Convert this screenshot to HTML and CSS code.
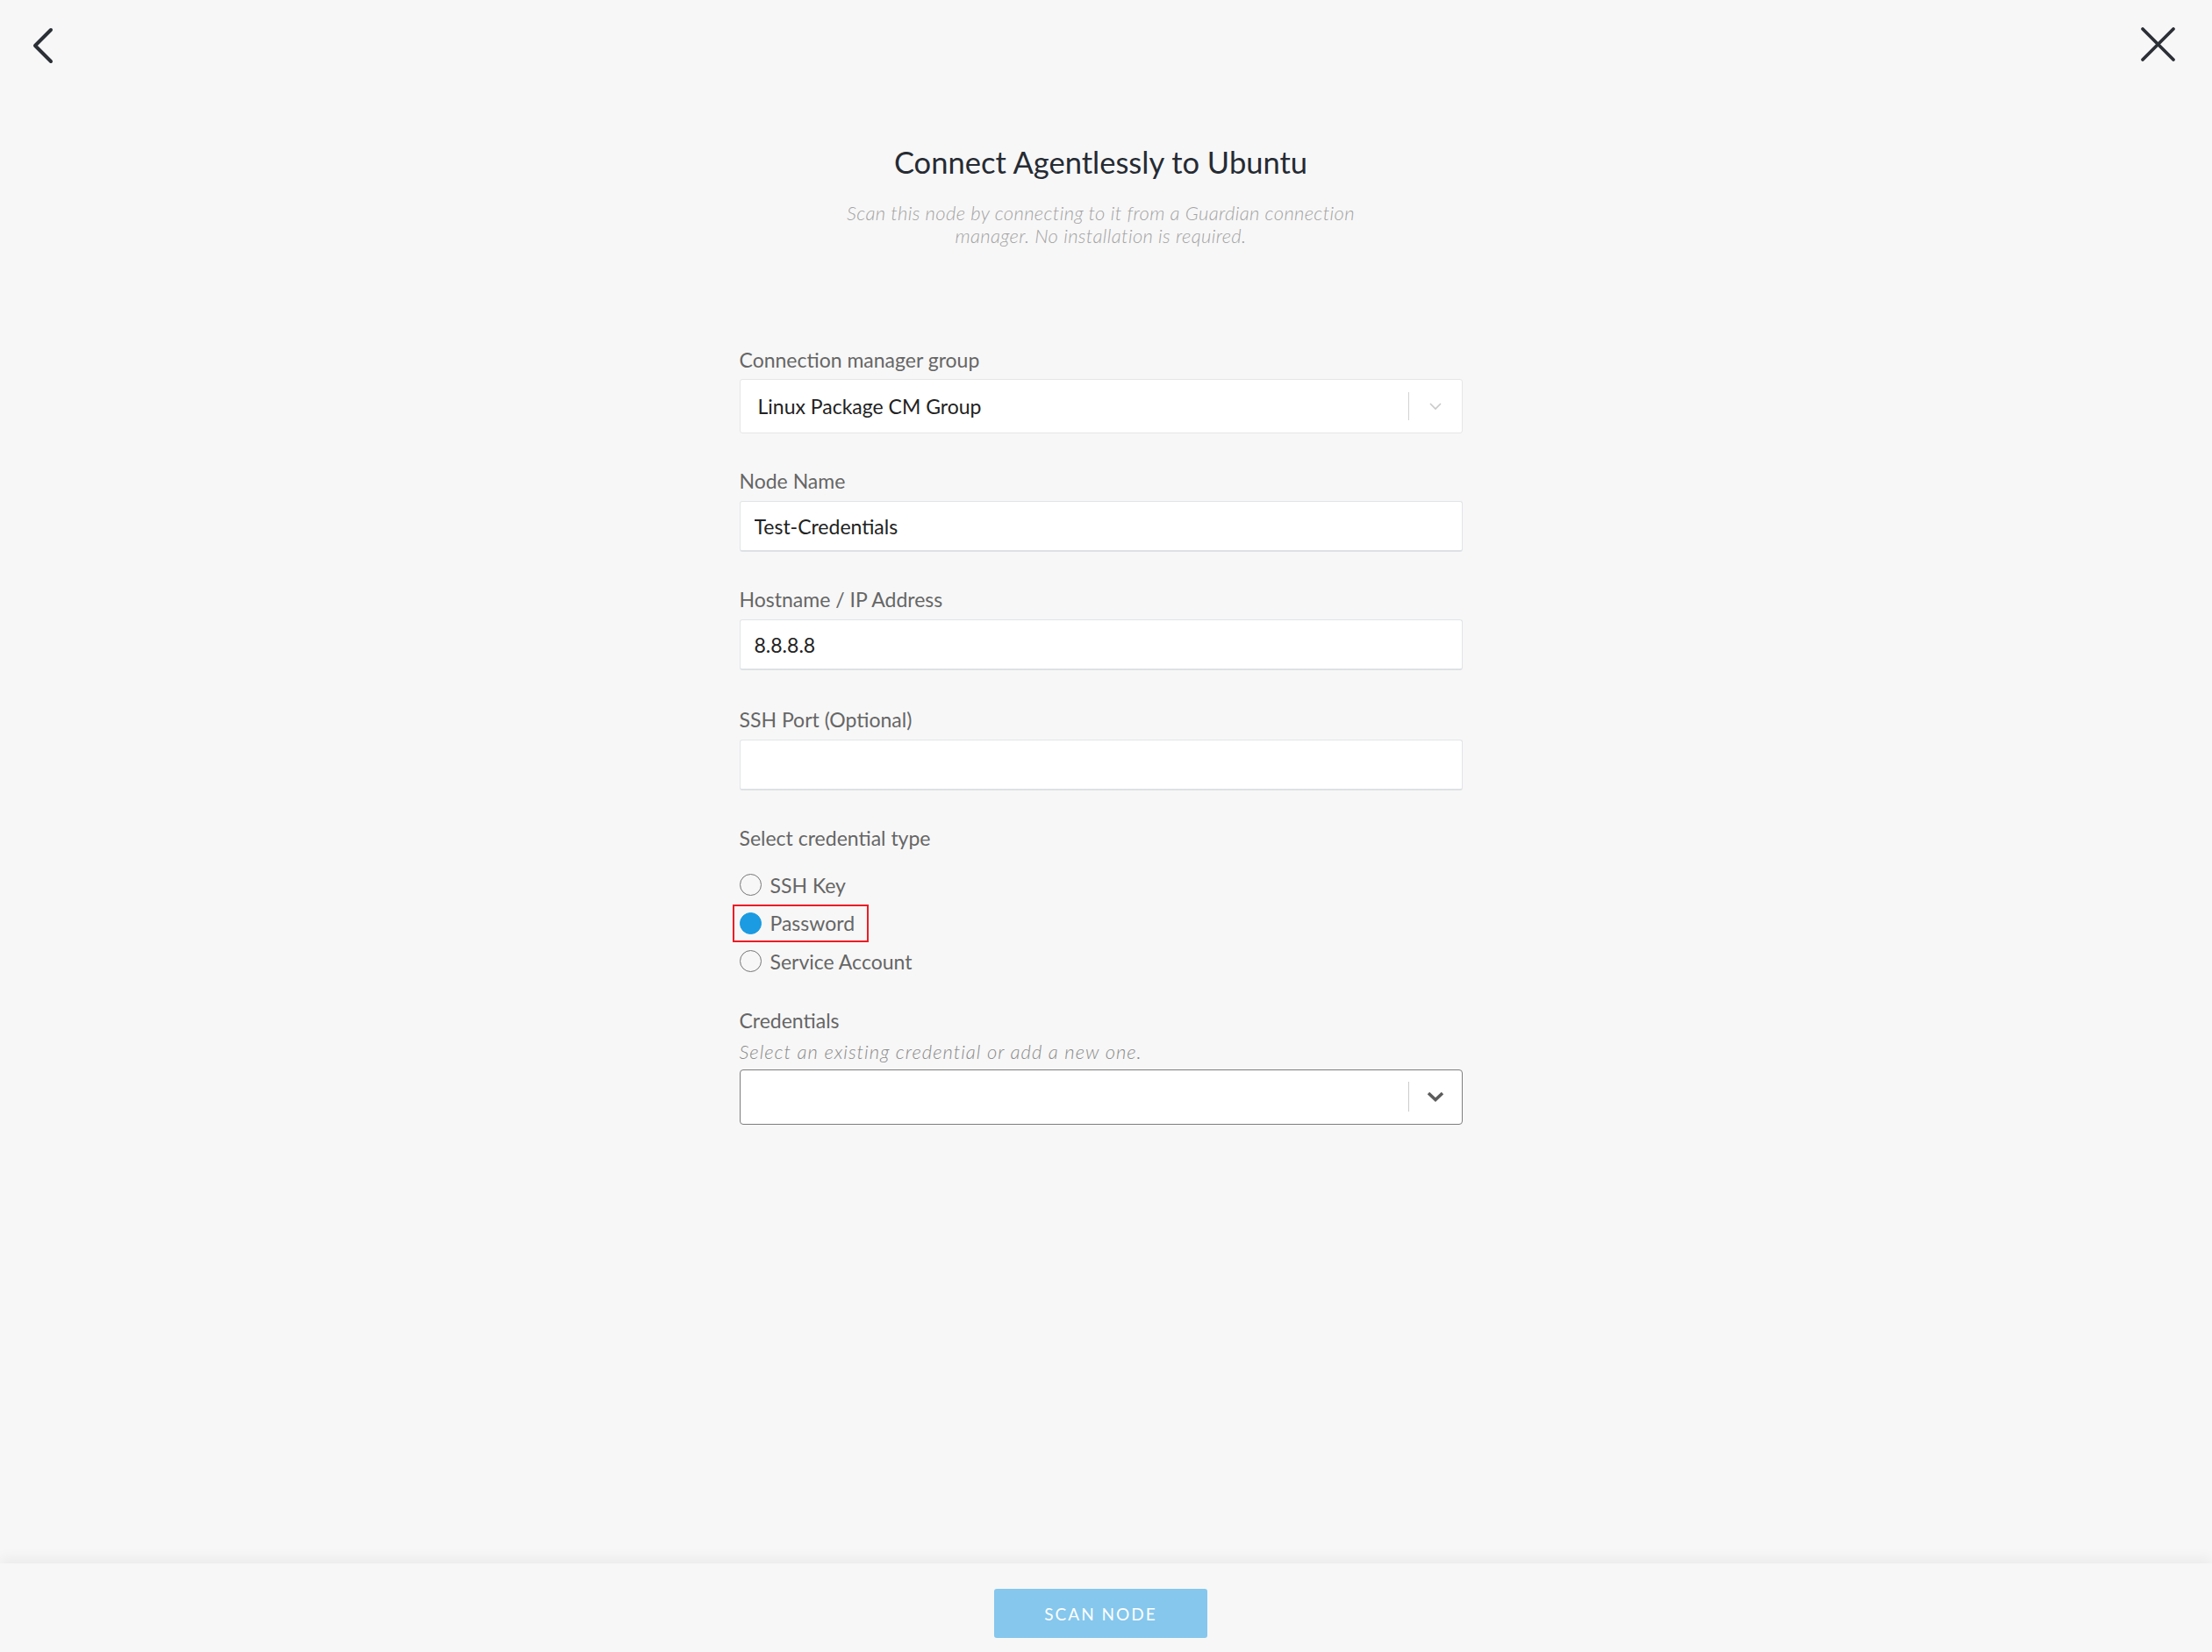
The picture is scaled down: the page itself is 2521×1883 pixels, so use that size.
FILE: index.html
```html
<!DOCTYPE html>
<html lang="en">
<head>
    <meta charset="UTF-8">
    <meta name="viewport" content="width=device-width, initial-scale=1.0">
    <title>Connect Agentlessly to Ubuntu</title>
    <link rel="stylesheet" href="styles.css">
</head>
<body>
    <div class="topbar">
        <a class="icon-btn back" href="#">
            <svg width="28" height="44" viewBox="0 0 28 44">
                <polyline points="22,4 4,22 22,40" fill="none" stroke="#2b2f36" stroke-width="4" stroke-linecap="round" stroke-linejoin="round"/>
            </svg>
        </a>
        <a class="icon-btn close" href="#">
            <svg width="44" height="44" viewBox="0 0 44 44">
                <line x1="4" y1="4" x2="39" y2="39" stroke="#2b2f36" stroke-width="3.8" stroke-linecap="round"/>
                <line x1="39" y1="4" x2="4" y2="39" stroke="#2b2f36" stroke-width="3.8" stroke-linecap="round"/>
            </svg>
        </a>
    </div>

    <div class="content">
        <h1>Connect Agentlessly to Ubuntu</h1>
        <p class="subtitle">Scan this node by connecting to it from a Guardian connection manager. No installation is required.</p>

        <div class="form">
            <div class="field">
                <label class="field-label">Connection manager group</label>
                <div class="select">
                    <span class="select-value">Linux Package CM Group</span>
                    <span class="select-sep"></span>
                    <span class="select-arrow">
                        <svg width="16" height="10" viewBox="0 0 16 10">
                            <polyline points="2,2 8,8 14,2" fill="none" stroke="#c9c9c9" stroke-width="1.6"/>
                        </svg>
                    </span>
                </div>
            </div>

            <div class="field">
                <label class="field-label">Node Name</label>
                <input class="text-input" type="text" value="Test-Credentials">
            </div>

            <div class="field field-wide">
                <label class="field-label">Hostname / IP Address</label>
                <input class="text-input" type="text" value="8.8.8.8">
            </div>

            <div class="field">
                <label class="field-label">SSH Port (Optional)</label>
                <input class="text-input" type="text" value="">
            </div>

            <div class="field radio-field">
                <label class="field-label">Select credential type</label>
                <div class="radio-list">
                    <div class="radio"><span class="radio-dot"></span>SSH Key</div>
                    <div class="radio marked"><span class="radio-dot checked"></span>Password</div>
                    <div class="radio"><span class="radio-dot"></span>Service Account</div>
                </div>
            </div>

            <div class="field">
                <label class="field-label">Credentials</label>
                <p class="hint">Select an existing credential or add a new one.</p>
                <div class="select select-dark">
                    <span class="select-value"></span>
                    <span class="select-sep"></span>
                    <span class="select-arrow">
                        <svg width="22" height="14" viewBox="0 0 22 14">
                            <polyline points="3,3 11,10.5 19,3" fill="none" stroke="#5c5c5c" stroke-width="3.6"/>
                        </svg>
                    </span>
                </div>
            </div>
        </div>
    </div>

    <div class="footer">
        <button class="scan-btn" disabled>SCAN NODE</button>
    </div>
</body>
</html>
```

FILE: styles.css
```css
* {
    box-sizing: border-box;
}
body {
    font-family: Lato, "Open Sans", sans-serif;
    background-color: #f7f7f7;
    color: #2a2f36;
    margin: 0;
    padding: 0;
    height: 100vh;
    display: flex;
    flex-direction: column;
}
.topbar {
    display: flex;
    justify-content: space-between;
    align-items: flex-start;
    height: 100px;
    padding: 29px 39px 0 36px;
}
.icon-btn {
    display: block;
    line-height: 0;
}
.icon-btn.back {
    margin-top: 1px;
}
.content {
    flex: 1;
    display: flex;
    flex-direction: column;
    align-items: center;
    padding: 63px 12px 0 0;
}
.content h1 {
    margin: 0;
    font-size: 34.5px;
    line-height: 44px;
    font-weight: 400;
    color: #262b33;
}
.subtitle {
    margin: 23px 0 0;
    max-width: 620px;
    font-size: 22px;
    line-height: 26px;
    letter-spacing: 0.35px;
    font-style: italic;
    font-weight: 300;
    color: #a3a3a3;
    text-align: center;
}
.form {
    width: 824px;
    margin-top: 114px;
}
.field {
    margin-bottom: 40px;
}
.field-wide {
    margin-bottom: 42px;
}
.field-label {
    display: block;
    font-size: 23px;
    line-height: 28px;
    color: #666666;
    margin-bottom: 9px;
}
.select {
    display: flex;
    align-items: center;
    height: 62px;
    margin-top: -1px;
    padding-left: 20px;
    background-color: #ffffff;
    border: 1px solid #e6e6e6;
    border-radius: 3px;
    font-size: 23px;
    color: #222222;
}
.select-value {
    flex: 1;
}
.select-sep {
    width: 1px;
    height: 32px;
    background-color: #d3d3d3;
}
.select-arrow {
    width: 60px;
    display: flex;
    justify-content: center;
    line-height: 0;
}
.select-dark {
    height: 63px;
    border-color: #7d7d7d;
    border-radius: 4px;
}
.select-dark .select-sep {
    height: 34px;
    background-color: #cccccc;
}
.text-input {
    display: block;
    width: 100%;
    height: 58px;
    padding: 0 16px;
    background-color: #ffffff;
    border: 1px solid #e1e4e7;
    border-bottom: 2px solid #dde1e4;
    border-radius: 3px;
    font-family: inherit;
    font-size: 23px;
    color: #222222;
    outline: none;
}
.radio-field {
    margin-bottom: 31px;
}
.radio-list {
    margin-top: 18px;
    display: flex;
    flex-direction: column;
}
.radio {
    display: flex;
    align-items: center;
    gap: 10px;
    width: fit-content;
    height: 43.5px;
    margin-left: -8px;
    padding: 0 14px 0 6px;
    border: 2px solid transparent;
    font-size: 23px;
    color: #666666;
}
.radio.marked {
    border-color: #ee1c24;
}
.radio-dot {
    width: 25px;
    height: 25px;
    border: 1.5px solid #767676;
    border-radius: 50%;
}
.radio-dot.checked {
    background-color: #1a9be2;
    border-color: #1a9be2;
}
.hint {
    margin: 8px 0 8px;
    font-size: 22px;
    line-height: 26px;
    font-style: italic;
    font-weight: 300;
    letter-spacing: 1px;
    color: #8a8a8a;
}
.footer {
    height: 101px;
    display: flex;
    justify-content: center;
    padding: 29px 12px 0 0;
    background-color: #f7f7f7;
    box-shadow: 0 -6px 14px rgba(0, 0, 0, 0.05);
}
.scan-btn {
    width: 243px;
    height: 56px;
    background-color: #85c7ed;
    border: none;
    border-radius: 3px;
    color: #ffffff;
    font-family: inherit;
    font-size: 19px;
    letter-spacing: 2px;
}
```
